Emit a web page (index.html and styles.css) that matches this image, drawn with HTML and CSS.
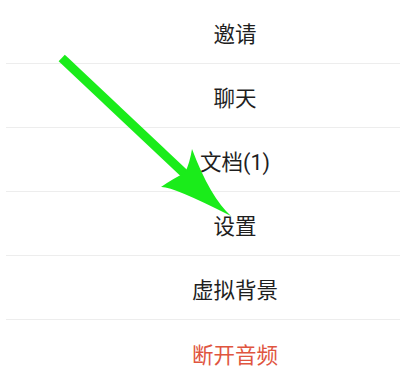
FILE: index.html
```html
<!DOCTYPE html>
<html>
<head>
    <meta charset="utf-8">
    <title>Meeting Menu</title>
    <link rel="stylesheet" href="styles.css">
</head>
<body>

<div id="main">
    <!--Menu list-->
    <ul class="menu">
        <li class="item">邀请</li>
        <li class="item">聊天</li>
        <li class="item">文档(1)</li>
        <li class="item">设置</li>
        <li class="item">虚拟背景</li>
        <li class="item danger">断开音频</li>
    </ul>

    <!--Green arrow over the list-->
    <svg class="arrow" width="400" height="382" viewBox="0 0 400 382">
        <line x1="65" y1="61" x2="188" y2="177" stroke="#1aec1a" stroke-width="9" stroke-linecap="square"/>
        <path d="M231 216 Q172 186 161 187 Q174 178 185 173 Q190 162 192 149 Q210 197 231 216 Z" fill="#1aec1a"/>
    </svg>
</div>

</body>
</html>
```

FILE: styles.css
```css
body,ul,li{ margin: 0; padding: 0;}
ul{ list-style: none;}
body{ background: #fff; font-family: Roboto, "Noto Sans CJK SC", sans-serif;}

#main{ position: relative; width: 400px; height: 382px; overflow: hidden;}

/*menu rows*/
.menu{ margin-left: 6px;}
.menu .item{
    height: 64px;
    box-sizing: border-box;
    border-bottom: 1px solid #ededed;
    padding: 2px 0 0 64px;
    display: flex;
    align-items: center;
    justify-content: center;
    font-size: 21.5px;
    color: #1e1e1e;
}
.menu .item:last-child{ border-bottom: none;}
.menu .danger{ color: #e0553f;}

.arrow{ position: absolute; left: 0; top: 0;}
```
